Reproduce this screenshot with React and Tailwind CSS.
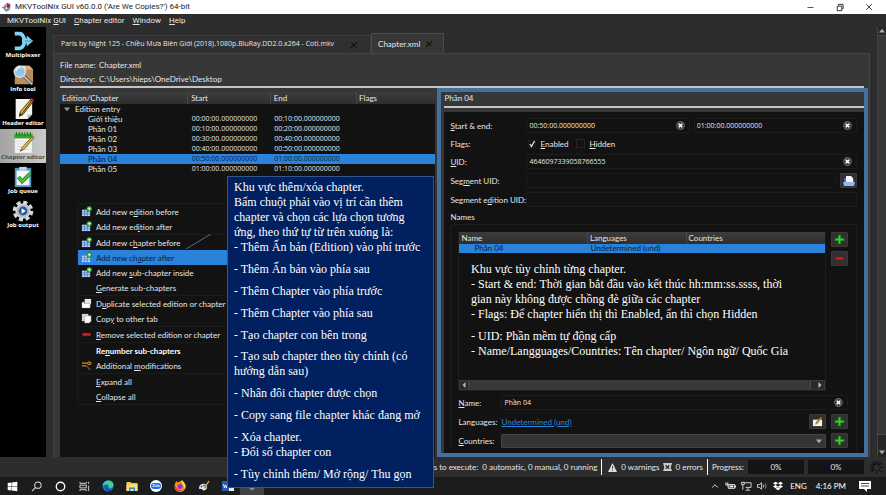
import React from 'react';
import clsx from 'clsx';
import { Minus, X, ChevronUp } from 'lucide-react';
import { FaWindows, FaDropbox } from 'react-icons/fa';

// "&" marks the mnemonic letter, as in Qt labels
const Label = ({ text }) => {
  const i = text.indexOf('&');
  if (i < 0 || text[i + 1] === ' ') return <span>{text}</span>;
  return (
    <span>
      {text.slice(0, i)}
      <u>{text[i + 1]}</u>
      {text.slice(i + 2)}
    </span>
  );
};

/* ---------- icons ---------- */

const AppIcon = () => (
  <svg viewBox="0 0 16 16" className="w-[10px] h-[10px]">
    <path d="M3 7l5-5 5 2-1 8-5 3-3-3z" fill="#aab4c8" stroke="#4a5570" />
    <path d="M8 2l5 2-1 6-4-2z" fill="#c4183c" />
    <circle cx="7" cy="10" r="2.5" fill="#e9edf5" stroke="#39435c" />
    <path d="M0 9h4" stroke="#8090a8" strokeWidth="2" />
  </svg>
);

const MultiplexerIcon = () => (
  <svg viewBox="0 0 24 24" className="w-6 h-[22px]">
    <path
      d="M3 4h5q3 0 4.500 3.500L14 11M3 20h5q3 0 4.500-3.500L14 13"
      fill="none"
      stroke="#7fd3f2"
      strokeWidth="4"
    />
    <path d="M11 9.500h5V6l7 6-7 6v-3.500h-5z" fill="#7fd3f2" />
    <path d="M14 12h8" stroke="#3f9cc6" strokeWidth="1.300" />
  </svg>
);

const InfoIcon = () => (
  <svg viewBox="0 0 24 24" className="w-6 h-[22px]">
    <path d="M3 6l4-4h12l4 4v16H3z" fill="#b98d5c" />
    <path d="M3 6l4-4h12l4 4z" fill="#d8b384" />
    <path d="M11 2h4v6h-4z" fill="#eed9b6" />
    <path d="M13 13l9 9" stroke="#555" strokeWidth="3.4" />
    <path d="M13 13l9 9" stroke="#ccc" strokeWidth="1.6" />
    <circle cx="8.500" cy="8.500" r="6" fill="#8fc4e8" stroke="#d7dee4" strokeWidth="1.600" />
    <path d="M4.500 8a4 4 0 0 1 5-4" stroke="#e8f6ff" strokeWidth="1.500" fill="none" />
  </svg>
);

const HeaderIcon = () => (
  <svg viewBox="0 0 24 24" className="w-6 h-[22px]">
    <path d="M4 1h18v17l-5 5H4z" fill="#f4f4f2" />
    <path d="M22 18l-5 5v-5z" fill="#bdbdbd" />
    <path d="M8 20l1-5L20 2l3 2-11 14z" fill="#edbd2c" stroke="#2c220a" strokeWidth=".9" />
    <path d="M11 17L21 4" stroke="#5a430c" strokeWidth="1.100" />
    <path d="M19 3l2-3 3 2-2 3z" fill="#c3242a" />
    <path d="M8 20l1-4 2 2z" fill="#222" />
  </svg>
);

const ChapterIcon = () => (
  <svg viewBox="0 0 24 24" className="w-6 h-[22px]">
    <path d="M3 3h19v20H3z" fill="#f6f6f4" stroke="#b5b5b5" strokeWidth=".5" />
    <path d="M2.500 2h20v5h-20z" fill="#35a32c" />
    <path d="M5 0v4M8 0v4M11 0v4M14 0v4M17 0v4M20 0v4" stroke="#1f6b19" strokeWidth="1" />
    <path d="M5 10h14M5 13h14M5 16h14M5 19h14" stroke="#c9c9c9" strokeWidth=".8" />
    <path d="M9 21l2-4L22 5l2 1-11 13z" fill="#e3ba50" stroke="#4a3a10" strokeWidth=".8" />
  </svg>
);

const QueueIcon = () => (
  <svg viewBox="0 0 24 24" className="w-6 h-[22px]">
    <path d="M3 2h18v21H3z" fill="#4f97bb" />
    <path d="M5 5h14v16H5z" fill="#f6f8f9" />
    <path d="M8 1h8v4H8z" fill="#c9d2d8" />
    <path d="M7 12l4 5 9-9" stroke="#197f19" strokeWidth="4" fill="none" />
    <path d="M7 12l4 5 9-9" stroke="#46c43c" strokeWidth="2.400" fill="none" />
  </svg>
);

const OutputIcon = () => (
  <svg viewBox="0 0 24 24" className="w-6 h-[22px]">
    <circle cx="12" cy="12" r="9.500" fill="none" stroke="#d5d8dc" strokeWidth="3.500" strokeDasharray="4.500 2.960" />
    <circle cx="12" cy="12" r="7.800" fill="#b9bec6" stroke="#eceef0" />
    <circle cx="12" cy="12" r="4.800" fill="#24599d" />
    <path d="M10.500 9l4.500 3-4.500 3z" fill="#fff" />
  </svg>
);

const GridPlus = ({ bold }) => (
  <svg viewBox="0 0 12 12" className="w-[11px] h-[11px]">
    <path d="M1 4h9v7H1z" fill={bold ? '#bcd8ff' : '#b4d0f6'} />
    <path d="M1 6.300h9M1 8.600h9M4 4v7M7 4v7" stroke="#3f6fc0" strokeWidth=".7" />
    <circle cx="9" cy="3" r="3" fill="#1d8a1d" />
    <path d="M9 1v4M7 3h4" stroke="#e9ffe9" strokeWidth="1.200" />
  </svg>
);

const DuplicateIcon = () => (
  <svg viewBox="0 0 12 12" className="w-[11px] h-[11px]">
    <path d="M4 1h7v6H4z" fill="#e8e8e8" />
    <path d="M1 5l2-1 1 2h6v5H1z" fill="#fff" stroke="#777" strokeWidth=".4" />
  </svg>
);

const CopyIcon = () => (
  <svg viewBox="0 0 12 12" className="w-[11px] h-[11px]">
    <path d="M1 1h7v8H1z" fill="#d9d9d9" />
    <path d="M4 3h7v6l-2 2H4z" fill="#fff" stroke="#888" strokeWidth=".5" />
  </svg>
);

const MinusIcon = () => (
  <svg viewBox="0 0 12 12" className="w-[11px] h-[11px]">
    <path d="M1.500 4.500h9v3h-9z" fill="#dd2222" stroke="#7c0b0b" strokeWidth=".6" />
  </svg>
);

const ToolsIcon = () => (
  <svg viewBox="0 0 12 12" className="w-[11px] h-[11px]">
    <path d="M1 3.500h6M1 6.500h5M7 3.500q2-3 4 0-2 3-4 0" fill="none" stroke="#c58a2c" strokeWidth="1.300" />
    <path d="M6 6l4 5" stroke="#8a5a1a" strokeWidth="1.300" />
  </svg>
);

const PlusIcon = () => (
  <svg viewBox="0 0 12 12" className="w-[11px] h-[11px]">
    <path d="M4.500 1h3v3.500H11v3H7.500V11h-3V7.500H1v-3h3.500z" fill="#35b22c" stroke="#156b12" strokeWidth=".7" />
    <path d="M6 2v8M2 6h8" stroke="#5fd050" strokeWidth=".7" />
  </svg>
);

const OpenIcon = () => (
  <svg viewBox="0 0 12 12" className="w-[12px] h-[12px]">
    <path d="M1 3h4l1 1h5v7H1z" fill="#3f70ad" />
    <path d="M3 1h5l2 2v5H3z" fill="#f2f6fb" />
    <path d="M0 7h12l-1 4H1z" fill="#8fb9ea" />
  </svg>
);

const EditIcon = () => (
  <svg viewBox="0 0 12 12" className="w-[11px] h-[11px]">
    <path d="M1 4h10v7H1z" fill="#f3f3f3" />
    <path d="M4 9l1-3 5-5 1 1-5 6z" fill="#d9a528" stroke="#5a430c" strokeWidth=".5" />
  </svg>
);

const ClearIcon = () => (
  <svg viewBox="0 0 10 10" className="w-[9px] h-[9px]">
    <circle cx="5" cy="5" r="4.600" fill="#8d8d8d" />
    <circle cx="5" cy="5" r="4" fill="#3c3c3c" />
    <path d="M3 3l4 4M7 3L3 7" stroke="#fff" strokeWidth="1.700" />
  </svg>
);

const TabClose = () => (
  <svg viewBox="0 0 10 10" className="w-2 h-2">
    <path d="M2 2l6 6M9 1L1 9" stroke="#111" strokeWidth="1.400" />
  </svg>
);

const Triangle = ({ d, className }) => (
  <svg viewBox="0 0 8 8" className={clsx('w-[6px] h-[6px]', className)}>
    <path d={d} fill="currentColor" />
  </svg>
);

/* ---------- title bar and menu ---------- */

const TitleBar = () => (
  <header className="flex items-center h-[14px] shrink-0 bg-white text-[#222] pl-[2px] pr-[12px]">
    <AppIcon />
    <h1 className="ml-[3px] text-[8px] font-normal font-['Roboto',sans-serif]">
      MKVToolNix GUI v60.0.0 ('Are We Copies?') 64-bit
    </h1>
    <div className="ml-auto flex items-center gap-[20px]">
      <button aria-label="Minimize"><Minus className="w-[9px] h-[9px]" /></button>
      <button aria-label="Restore">
        <svg viewBox="0 0 10 10" className="w-[9px] h-[9px]" fill="none" stroke="#222">
          <path d="M2.500 3.500h5v5h-5zM4 3V1.500h5v5H8" />
        </svg>
      </button>
      <button aria-label="Close"><X className="w-[10px] h-[10px]" /></button>
    </div>
  </header>
);

const MenuBar = () => (
  <nav className="flex items-center gap-[8px] h-[13px] shrink-0 pl-[7px] bg-[#2d2d2d] text-[8px] font-['Roboto',sans-serif]">
    {['MKVToolNix &GUI', '&Chapter editor', '&Window', '&Help'].map((m) => (
      <button key={m}><Label text={m} /></button>
    ))}
  </nav>
);

/* ---------- tool sidebar ---------- */

const TOOLS = [
  { name: 'Multiplexer', Icon: MultiplexerIcon },
  { name: 'Info tool', Icon: InfoIcon },
  { name: 'Header editor', Icon: HeaderIcon },
  { name: 'Chapter editor', Icon: ChapterIcon, active: true },
  { name: 'Job queue', Icon: QueueIcon },
  { name: 'Job output', Icon: OutputIcon },
];

const Sidebar = () => (
  <aside className="w-[46px] shrink-0 bg-black">
    {TOOLS.map(({ name, Icon, active }) => (
      <button
        key={name}
        className={clsx(
          'flex flex-col items-center w-full h-[34px] pt-[3px] text-[6px] leading-[7px] font-bold whitespace-nowrap font-["Open_Sans",sans-serif]',
          active ? 'bg-linear-to-r from-[#a3a3a3] to-[#cbcbcb] text-[#4a4a4a]' : 'text-white'
        )}
      >
        <Icon />
        {name}
      </button>
    ))}
  </aside>
);

/* ---------- chapter tree ---------- */

const CHAPTERS = [
  ['Giới thiệu', '00:00:00.000000000', '00:10:00.000000000'],
  ['Phần 01', '00:10:00.000000000', '00:20:00.000000000'],
  ['Phần 02', '00:30:00.000000000', '00:40:00.000000000'],
  ['Phần 03', '00:40:00.000000000', '00:50:00.000000000'],
  ['Phần 04', '00:50:00.000000000', '01:00:00.000000000'],
  ['Phần 05', '01:00:00.000000000', '01:10:00.000000000'],
];

const ChapterTree = () => (
  <section className="flex-[375] min-w-0 mt-[4px] bg-[#121212]">
    <table className="w-full table-fixed border-collapse text-[8px] leading-[10px]">
      <thead>
        <tr className="h-[12px] bg-linear-to-b from-[#3c3c3c] to-[#2e2e2e] text-left">
          <th className="w-[34%] pl-[2px] font-normal">Edition/Chapter</th>
          <th className="w-[22%] pl-[3px] font-normal border-l border-[#484848]">Start</th>
          <th className="w-[23%] pl-[3px] font-normal border-l border-[#484848]">End</th>
          <th className="pl-[2px] font-normal border-l border-[#484848]">Flags</th>
        </tr>
      </thead>
      <tbody>
        <tr className="h-[10px]">
          <td colSpan={4} className="pl-[4px]">
            <div className="flex items-center gap-[5px]">
              <Triangle d="M0 2h8L4 7z" className="text-[#999]" />
              Edition entry
            </div>
          </td>
        </tr>
        {CHAPTERS.map(([name, start, end]) => (
          <tr key={name} className={clsx('h-[10px]', name === 'Phần 04' && 'bg-[#2a82da] text-[#06203c]')}>
            <td className="pl-[28px]">{name}</td>
            <td className="pl-[4px] text-[7px] font-['Open_Sans',sans-serif]">{start}</td>
            <td className="pl-[4px] text-[7px] font-['Open_Sans',sans-serif]">{end}</td>
            <td />
          </tr>
        ))}
      </tbody>
    </table>
  </section>
);

/* ---------- chapter properties ---------- */

const Field = ({ id, value = '', clear }) => (
  <div className="flex flex-1 min-w-0 items-center h-[15px] px-[2px] border border-[#1c1c1c] rounded-[2px]">
    <input
      id={id}
      aria-label={id}
      defaultValue={value}
      className="flex-1 min-w-0 bg-transparent text-[7px] font-['Open_Sans',sans-serif] outline-none"
    />
    {clear && <button aria-label="Clear" className="mr-[2px]"><ClearIcon /></button>}
  </div>
);

const ToolButton = ({ label, children }) => (
  <button
    aria-label={label}
    className="flex items-center justify-center w-[17px] h-[15px] shrink-0 rounded-[1px] border border-[#3a3a3a] bg-[#303030]"
  >
    {children}
  </button>
);

const FormLabel = ({ text, htmlFor, className }) => (
  <label htmlFor={htmlFor} className={clsx('shrink-0 whitespace-nowrap', className)}><Label text={text} /></label>
);

const NamesBox = () => (
  <div className="flex flex-col flex-1 min-h-0 mt-[1px] border border-b-0 border-[#1c1c1c] rounded-[2px] pl-[7px] pr-[8px] pt-[7px] pb-[5px]">
    <div className="flex flex-1 min-h-0 gap-[5px]">
      <div className="flex flex-col flex-1 min-w-0 border border-t-0 border-[#1e1e1e]">
        <table className="w-full table-fixed border-collapse leading-[9px]">
          <thead>
            <tr className="h-[12px] bg-linear-to-b from-[#3c3c3c] to-[#2e2e2e] text-left">
              <th className="w-[35%] pl-[2px] font-normal">Name</th>
              <th className="w-[27%] pl-[2px] font-normal border-l border-[#484848]">Languages</th>
              <th className="pl-[2px] font-normal border-l border-[#484848]">Countries</th>
            </tr>
          </thead>
          <tbody>
            <tr className="h-[9px] bg-[#2a82da] text-[#06203c] text-[8px]">
              <td className="pl-[15px]">Phần 04</td>
              <td className="pl-[3px] whitespace-nowrap">Undetermined (und)</td>
              <td />
            </tr>
          </tbody>
        </table>
        <div className="mt-auto flex items-center h-[10px] bg-[#2a2a2a] border border-[#3a3a3a] text-[#bbb]">
          <Triangle d="M6 0v8L2 4z" className="mx-[1px]" />
          <div className="flex-1 h-full bg-[#393939] border-x border-[#4a4a4a] mr-[5px]" />
          <Triangle d="M2 0v8l4-4z" className="mx-[1px]" />
        </div>
      </div>
      <div className="flex flex-col gap-[4px]">
        <ToolButton label="Add name"><PlusIcon /></ToolButton>
        <ToolButton label="Remove name"><MinusIcon /></ToolButton>
      </div>
    </div>

    <div className="flex items-center h-[15px] mt-[4px]">
      <FormLabel text="&Name:" htmlFor="chapter-name" className="w-[43px]" />
      <Field id="chapter-name" value="Phần 04" clear />
    </div>
    <div className="flex items-center h-[15px] mt-[4px] gap-[5px]">
      <span className="w-[38px] shrink-0">Languages:</span>
      <a href="#language" className="mr-auto text-[#2a82da] underline">Undetermined (und)</a>
      <ToolButton label="Edit language"><EditIcon /></ToolButton>
      <ToolButton label="Add language"><PlusIcon /></ToolButton>
    </div>
    <div className="flex items-center h-[15px] mt-[4px]">
      <FormLabel text="&Countries:" htmlFor="countries" className="w-[43px]" />
      <div className="relative flex-1 mr-[5px]">
        <select id="countries" className="block w-full h-[14px] appearance-none rounded-[1px] border border-[#454545] bg-[#353535]">
          <option></option>
        </select>
        <Triangle d="M0 2h8L4 7z" className="absolute right-[4px] top-[4px] text-[#aaa]" />
      </div>
      <ToolButton label="Add country"><PlusIcon /></ToolButton>
    </div>
  </div>
);

const ChapterProperties = () => (
  <section className="flex flex-col flex-[419] min-w-0 border-4 border-[#41719c] bg-[#373737] pl-[3px] text-[8px] leading-[10px]">
    <h2 className="h-[14px] pt-[1px] font-normal">Phần 04</h2>
    <div className="h-[2px] shrink-0 bg-[#c4c4c4]" />
    <form className="flex flex-col flex-1 min-h-0 mt-[4px] bg-[#121212] pl-[6px] pr-[7px] pt-[6px]">
      <div className="flex items-center h-[15px]">
        <FormLabel text="&Start & end:" htmlFor="start" className="w-[76px]" />
        <div className="flex flex-1 gap-[4px]">
          <Field id="start" value="00:50:00.000000000" clear />
          <Field id="end" value="01:00:00.000000000" clear />
        </div>
      </div>
      <div className="flex items-center h-[15px] mt-[3px]">
        <span className="w-[78px] shrink-0">Flags:</span>
        <label className="flex items-center gap-[4px] w-[48px]">
          <span className="relative flex w-[8px] h-[8px]">
            <input type="checkbox" defaultChecked className="peer appearance-none w-full h-full border border-[#1f1f1f]" />
            <svg viewBox="0 0 8 8" className="absolute inset-0 w-2 h-2 hidden peer-checked:block" fill="none" stroke="#e5e5e5" strokeWidth="1.300">
              <path d="M2 4l1.500 2.500L6.500 1" />
            </svg>
          </span>
          <Label text="&Enabled" />
        </label>
        <label className="flex items-center gap-[4px]">
          <input type="checkbox" className="appearance-none w-[9px] h-[9px] border border-[#242424]" />
          <Label text="&Hidden" />
        </label>
      </div>
      <div className="flex items-center h-[15px] mt-[3px]">
        <FormLabel text="&UID:" htmlFor="uid" className="w-[76px]" />
        <Field id="uid" value="4646097339058766555" clear />
      </div>
      <div className="flex items-center h-[15px] mt-[4px]">
        <FormLabel text="Seg&ment UID:" htmlFor="segment-uid" className="w-[76px]" />
        <Field id="segment-uid" />
        <span className="ml-[4px]"><ToolButton label="Open segment file"><OpenIcon /></ToolButton></span>
      </div>
      <div className="flex items-center h-[15px] mt-[4px]">
        <FormLabel text="Segment e&dition UID:" htmlFor="segment-edition-uid" className="w-[76px]" />
        <Field id="segment-edition-uid" />
      </div>
      <h3 className="mt-[4px] h-[12px] font-normal leading-[12px]">Names</h3>
      <NamesBox />
    </form>
  </section>
);

/* ---------- editor tab ---------- */

const Editor = () => (
  <main className="flex flex-col flex-1 min-w-0 pl-[7px] pr-[7px] bg-[#2d2d2d]">
    <div className="flex items-end h-[26px] shrink-0 pt-[6px]">
      <button className="flex items-center gap-[16px] h-[18px] pl-[7px] pr-[12px] border border-b-0 border-[#3c3c3c] bg-[#303030] text-[7px] font-['Open_Sans',sans-serif] whitespace-nowrap">
        Paris by Night 125 - Chiều Mưa Biên Giới (2018).1080p.BluRay.DD2.0.x264 - Coti.mkv
        <TabClose />
      </button>
      <button className="flex items-center gap-[5px] h-[20px] pl-[6px] pr-[10px] border border-b-0 border-[#4a4a4a] bg-[#373737] text-[8px] whitespace-nowrap">
        Chapter.xml
        <TabClose />
      </button>
    </div>
    <div className="flex flex-col flex-1 min-h-0 border border-b-0 border-[#444] bg-[#373737] pl-[6px] pr-px">
      <dl className="grid grid-cols-[39px_1fr] pt-[4px] text-[8px] leading-[14px]">
        <dt>File name:</dt>
        <dd>Chapter.xml</dd>
        <dt>Directory:</dt>
        <dd>C:\Users\hieps\OneDrive\Desktop</dd>
      </dl>
      <div className="h-[2px] shrink-0 mr-[4px] bg-[#c4c4c4]" />
      <div className="flex flex-1 min-h-0 gap-[2px]">
        <ChapterTree />
        <ChapterProperties />
      </div>
    </div>
  </main>
);

const Scrollbar = () => (
  <div className="flex flex-col items-center w-[9px] shrink-0 bg-[#262626] border-l border-[#444] text-[#aaa]">
    <Triangle d="M0 6h8L4 1z" className="my-[1px]" />
    <div className="flex-1 w-full bg-[#373737] border-y border-[#4a4a4a] mb-[14px]" />
    <Triangle d="M0 2h8L4 7z" className="mb-[2px]" />
  </div>
);

/* ---------- status bar and taskbar ---------- */

const StatusBar = () => (
  <footer className="flex items-center justify-end h-[20px] shrink-0 bg-[#2d2d2d] text-[8px] pr-[2px] whitespace-nowrap">
    <span className="mr-[4px]">Jobs to execute:&nbsp; 0 automatic, 0 manual, 0 running</span>
    <div className="w-px h-[16px] bg-white mr-[6px]" />
    <svg viewBox="0 0 10 10" className="w-[9px] h-[9px] mr-[4px]">
      <path d="M5 0l5 10H0z" fill="#ddd" />
      <path d="M5 3.500v3M5 7.500v1.200" stroke="#333" />
    </svg>
    0 warnings
    <svg viewBox="0 0 10 10" className="w-[9px] h-[9px] ml-[4px] mr-[3px]">
      <path d="M0 0h10L8.500 5 10 9H0l1.500-4z" fill="#ccc" />
      <path d="M3 2.500l4 4M7 2.500l-4 4" stroke="#222" strokeWidth="1.300" />
    </svg>
    0 errors
    <div className="w-px h-[16px] bg-white mx-[4px]" />
    Progress:
    <div className="flex items-center justify-center w-[56px] h-[14px] ml-[4px] bg-[#141414]">0%</div>
    <div className="flex items-center justify-center w-[56px] h-[14px] ml-[4px] mr-[5px] bg-[#141414]">0%</div>
    <svg viewBox="0 0 16 16" className="w-[15px] h-[15px]" stroke="#111" strokeWidth="1.300">
      <path d="M8 1v4M8 11v4M1 8h4M11 8h4M3 3l3 3M10 10l3 3M13 3l-3 3M6 10l-3 3M5.300 1.500l1.200 3.600M10.700 1.500L9.500 5M1.500 5.300L5 6.500M1.500 10.700L5 9.500" />
    </svg>
  </footer>
);

const TaskIcon = ({ label, children }) => (
  <button aria-label={label} className="flex items-center justify-center w-6 h-full">{children}</button>
);

const Taskbar = () => (
  <footer className="flex items-center h-[18px] shrink-0 bg-[#1b1d1d] text-[8px] text-white">
    <TaskIcon label="Start"><FaWindows className="w-[11px] h-[11px]" /></TaskIcon>
    <TaskIcon label="Search">
      <svg viewBox="0 0 12 12" className="w-[11px] h-[11px]" fill="none" stroke="#ddd" strokeWidth="1.100">
        <circle cx="7.500" cy="4.500" r="3.500" />
        <path d="M5 7l-4 4" />
      </svg>
    </TaskIcon>
    <TaskIcon label="Cortana">
      <svg viewBox="0 0 12 12" className="w-[11px] h-[11px]" fill="none" stroke="#fff" strokeWidth="1.500">
        <circle cx="6" cy="6" r="4.600" />
      </svg>
    </TaskIcon>
    <TaskIcon label="Task view">
      <svg viewBox="0 0 12 12" className="w-[11px] h-[11px]" fill="none" stroke="#ddd">
        <path d="M1 1v1.500h7V1M1 4.500h7v3H1zM1 11V9.500h7V11M10.500 1v2M10.500 5v6" />
      </svg>
    </TaskIcon>
    <TaskIcon label="Edge">
      <svg viewBox="0 0 12 12" className="w-[12px] h-[12px]">
        <circle cx="6" cy="6" r="5.500" fill="#1778c8" />
        <path d="M.6 6C1 2 4 .5 6.500.5c3 0 5 2 5 4.500 0 2-1.500 3-3.500 3-1 0-1.500-.7-1-1.500C7 4 3 3 .6 6z" fill="#3fcf9a" />
        <path d="M4 6c-1 3 2 5 5 4" stroke="#0b3f80" strokeWidth="1.200" fill="none" />
      </svg>
    </TaskIcon>
    <TaskIcon label="File Explorer">
      <svg viewBox="0 0 12 12" className="w-[12px] h-[12px]">
        <path d="M.5 2h4l1 1h6v8H.5z" fill="#f6c344" />
        <path d="M.5 4.500h11V11H.5z" fill="#ffdd7a" />
        <path d="M3 7.500h6V11H7.500V9h-3v2H3z" fill="#2d8ad6" />
      </svg>
    </TaskIcon>
    <TaskIcon label="Zalo">
      <span className="flex items-center justify-center w-[12px] h-[12px] rounded-full bg-white">
        <span className="px-[1px] bg-[#1a6ff0] rounded-full text-[4px] leading-[6px] font-bold">Zalo</span>
      </span>
    </TaskIcon>
    <TaskIcon label="Firefox">
      <svg viewBox="0 0 12 12" className="w-[12px] h-[12px]">
        <path d="M6 1.500C8 0 8 0 8 0c1 2 3.500 3 3.500 6.500a5.500 5.500 0 0 1-11 0C.5 4 1.500 2 2.500 1l1 1.500z" fill="#ff8a1c" />
        <path d="M8 0c1 2 3.500 3 3.500 6.500 0 1-.5 2-1 2.500C10 5 7 4 8 0z" fill="#ffd83a" />
        <circle cx="6" cy="6.500" r="2.500" fill="#7a3ad0" />
        <path d="M1 5c1 4 4 6 8 5-3 3-9 1-8-5z" fill="#f0304c" />
      </svg>
    </TaskIcon>
    <TaskIcon label="Paint">
      <svg viewBox="0 0 12 12" className="w-[12px] h-[12px]">
        <path d="M1 8c0-3 3-5 6-4s3 6-1 6.500C4 11 5 9 3.500 9S1 9.500 1 8z" fill="#d9e6ef" />
        <circle cx="3.500" cy="6.500" r="1" fill="#d33" />
        <circle cx="6" cy="5.500" r="1" fill="#3a7ad3" />
        <circle cx="7.500" cy="7.500" r="1" fill="#3aa648" />
        <path d="M7 7l4-6" stroke="#e08a2a" strokeWidth="1.400" />
      </svg>
    </TaskIcon>
    <TaskIcon label="Word">
      <svg viewBox="0 0 12 12" className="w-[12px] h-[12px]">
        <path d="M4 1h8v10H4z" fill="#e8f0fa" />
        <path d="M0 1h7v10H0z" fill="#2b5cad" />
        <path d="M1.500 4l1 4 1-3 1 3 1-4" stroke="#fff" strokeWidth=".8" fill="none" />
      </svg>
    </TaskIcon>
    <button aria-label="MKVToolNix GUI" className="flex justify-center items-center w-[24px] h-full bg-[#414343]">
      <AppIcon />
    </button>

    <div className="ml-auto flex items-center gap-[5px] pr-[15px]">
      <ChevronUp className="w-[10px] h-[10px]" />
      <svg viewBox="0 0 12 10" className="w-[11px] h-[10px]" fill="none" stroke="#fff">
        <path d="M3.500 3.500h7v4h-7zM11.500 4.500v2M1 1v3h2V1" />
        <path d="M5 5.500h4" strokeWidth="2" />
      </svg>
      <svg viewBox="0 0 12 10" className="w-[11px] h-[10px]" fill="none" stroke="#ddd">
        <path d="M3 1.500h8v5H5M7.500 7v2M5 9.500h5M.5 1h3v2.500h-3zM2 4v5" />
      </svg>
      <svg viewBox="0 0 12 10" className="w-[11px] h-[10px]" fill="none" stroke="#ddd">
        <path d="M.5 3.500h2l2.500-2v7l-2.500-2h-2zM7 3.500q1 1.500 0 3" />
        <path d="M9 2q2 3 0 6" stroke="#888" />
      </svg>
      <FaDropbox className="w-[10px] h-[10px]" />
      <span className="ml-[2px]">ENG</span>
      <time className="ml-[4px]">4:16 PM</time>
      <svg viewBox="0 0 12 12" className="w-[12px] h-[12px] ml-[8px]">
        <path d="M0 1h12v8H8v3L5 9H0z" fill="#fff" />
        <path d="M2 3.500h8M2 6h8" stroke="#333" strokeWidth=".9" />
      </svg>
    </div>
  </footer>
);

/* ---------- context menu ---------- */

const MENU = [
  { text: 'Add new e&dition before', icon: <GridPlus /> },
  { text: 'Add new ed&ition after', icon: <GridPlus />, sep: true },
  { text: 'Add new c&hapter before', icon: <GridPlus /> },
  { text: 'Add new ch&apter after', icon: <GridPlus bold />, active: true },
  { text: 'Add new &sub-chapter inside', icon: <GridPlus /> },
  { text: '&Generate sub-chapters', sep: true },
  { text: 'D&uplicate selected edition or chapter', icon: <DuplicateIcon /> },
  { text: 'Cop&y to other tab', icon: <CopyIcon />, sep: true },
  { text: '&Remove selected edition or chapter', icon: <MinusIcon />, sep: true },
  { text: 'Re&number sub-chapters', bold: true },
  { text: 'Additional &modifications', icon: <ToolsIcon />, sep: true },
  { text: '&Expand all' },
  { text: '&Collapse all' },
];

const ContextMenu = () => (
  <div role="menu" className="absolute left-[77px] top-[203px] w-[151px] border border-[#1b1b1b] bg-[#121212] text-[8px]">
    {MENU.map(({ text, icon, sep, active, bold }) => (
      <button
        key={text}
        role="menuitem"
        className={clsx(
          'flex items-center gap-[4px] w-full pl-[3px] whitespace-nowrap text-left',
          sep ? 'h-[16px] border-b border-[#1b1b1b]' : 'h-[15px]',
          active && 'bg-[#2a82da] text-[#06203c]',
          bold && 'font-bold text-white'
        )}
      >
        <span className="w-[11px] h-[11px]">{icon}</span>
        <Label text={text} />
      </button>
    ))}
  </div>
);

/* ---------- callouts ---------- */

const MenuCallout = () => (
  <div className="absolute left-[227px] top-[176px] w-[207px] h-[312px] border border-[#31588c] bg-[#002060] pl-[6px] pt-[3px] text-[12px] leading-[15px] text-white font-['Liberation_Serif',serif] whitespace-nowrap">
    <p>Khu vực thêm/xóa chapter.</p>
    <p>Bấm chuột phải vào vị trí cần thêm</p>
    <p>chapter và chọn các lựa chọn tương</p>
    <p>ứng, theo thứ tự từ trên xuống là:</p>
    <p>- Thêm Ấn bản (Edition) vào phí trước</p>
    <p className="mt-[7px]">- Thêm Ấn bản vào phía sau</p>
    <p className="mt-[7px]">- Thêm Chapter vào phía trước</p>
    <p className="mt-[7px]">- Thêm Chapter vào phía sau</p>
    <p className="mt-[7px]">- Tạo chapter con bên trong</p>
    <p className="mt-[6px]">- Tạo sub chapter theo tùy chỉnh (có</p>
    <p>hướng dẫn sau)</p>
    <p className="mt-[7px]">- Nhân đôi chapter được chọn</p>
    <p className="mt-[7px]">- Copy sang file chapter khác đang mở</p>
    <p className="mt-[7px]">- Xóa chapter.</p>
    <p>- Đổi số chapter con</p>
    <p className="mt-[7px]">- Tùy chỉnh thêm/ Mở rộng/ Thu gọn</p>
  </div>
);

const PropertiesCallout = () => (
  <div className="absolute left-[471px] top-[262px] text-[12px] leading-[15px] text-white font-['Liberation_Serif',serif] whitespace-nowrap">
    <p>Khu vực tùy chỉnh từng chapter.</p>
    <p>- Start &amp; end: Thời gian bắt đầu vào kết thúc hh:mm:ss.ssss, thời</p>
    <p>gian này không được chồng đè giữa các chapter</p>
    <p>- Flags: Để chapter hiển thị thì Enabled, ẩn thì chọn Hidden</p>
    <p className="mt-[7px]">- UID: Phần mềm tự động cấp</p>
    <p>- Name/Langguages/Countries: Tên chapter/ Ngôn ngữ/ Quốc Gia</p>
  </div>
);

const App = () => (
  <div className="relative flex flex-col h-screen overflow-hidden bg-[#2d2d2d] text-[#e6e6e6] font-['Lato','Noto_Sans',sans-serif]">
    <TitleBar />
    <MenuBar />
    <div className="flex flex-1 min-h-0">
      <Sidebar />
      <Editor />
      <Scrollbar />
    </div>
    <StatusBar />
    <Taskbar />

    <ContextMenu />
    <svg viewBox="0 0 26 16" className="absolute left-[186px] top-[234px] w-[26px] h-[16px]">
      <path d="M0 15L25 0" stroke="#41719c" />
    </svg>
    <MenuCallout />
    <PropertiesCallout />
  </div>
);

export default App;
